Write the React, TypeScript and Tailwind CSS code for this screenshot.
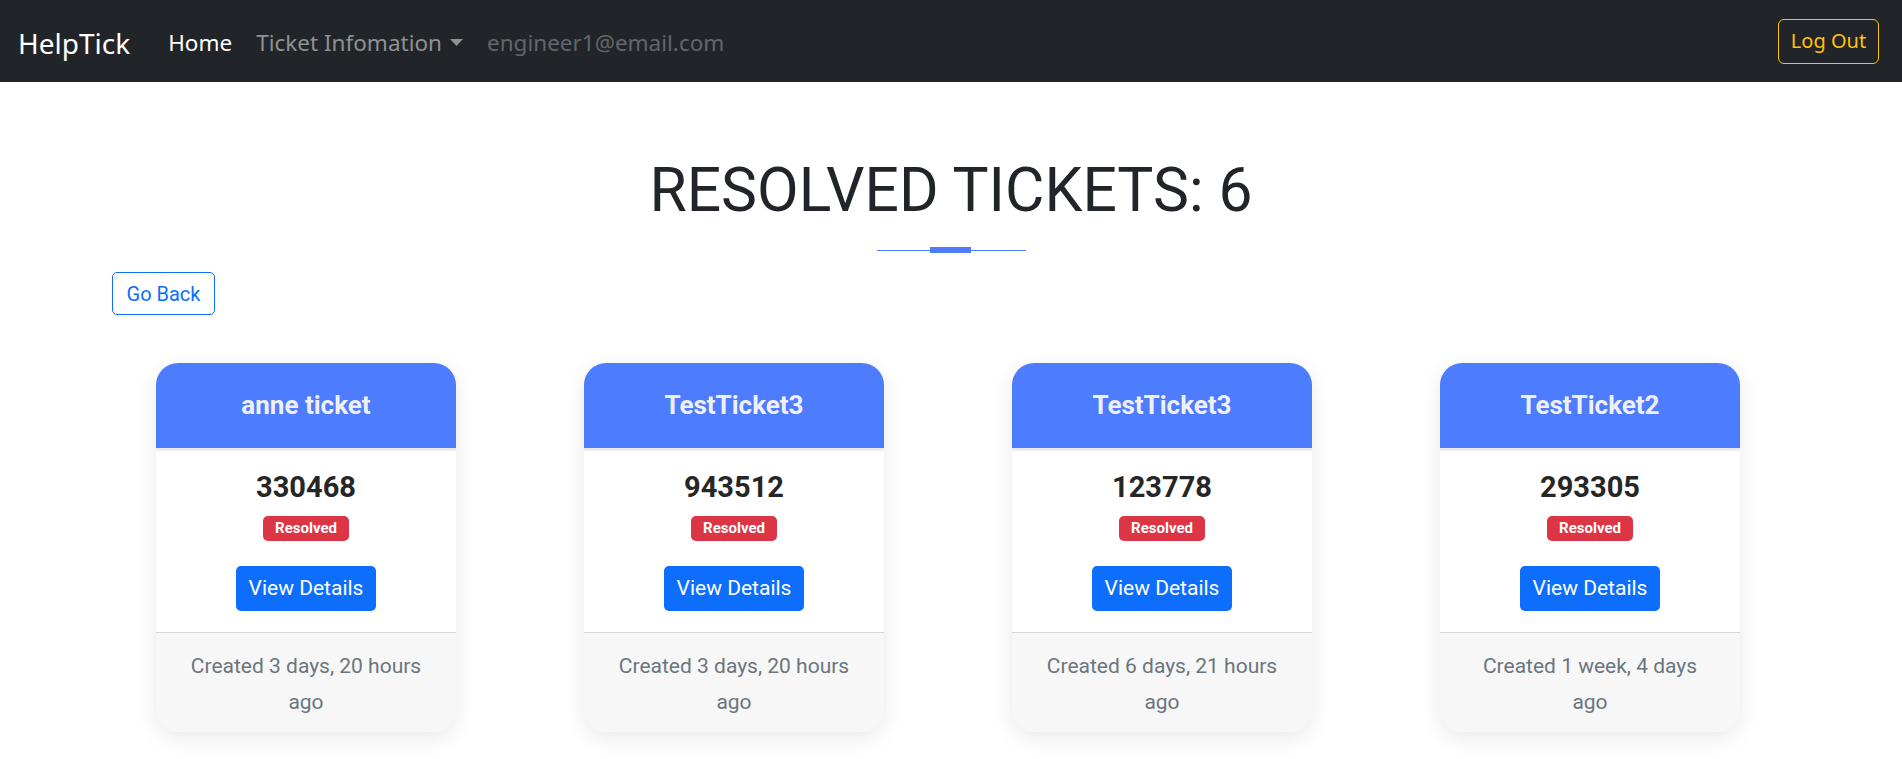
const tickets = [
  { title: "anne ticket", id: "330468", created: "Created 3 days, 20 hours ago" },
  { title: "TestTicket3", id: "943512", created: "Created 3 days, 20 hours ago" },
  { title: "TestTicket3", id: "123778", created: "Created 6 days, 21 hours ago" },
  { title: "TestTicket2", id: "293305", created: "Created 1 week, 4 days ago" },
];

function Navbar() {
  return (
    <nav className="flex h-[82px] items-center bg-[#212529] pl-[18px] pr-[23px] font-['Noto_Sans','Open_Sans',sans-serif]">
      <span className="mt-[3px] text-[28px] text-white">HelpTick</span>
      <div className="mt-[3px] ml-[38px] flex items-center gap-[24px] text-[22.5px]">
        <span className="text-white">Home</span>
        <span className="flex items-center text-[#8f9193]">
          Ticket Infomation
          <svg className="ml-[8px]" width="13" height="7" viewBox="0 0 13 7">
            <path d="M0 0h13L6.5 7z" fill="#8f9193" />
          </svg>
        </span>
        <span className="text-[#62666b]">engineer1@email.com</span>
      </div>
      <button
        type="button"
        className="ml-auto h-[45px] w-[101px] rounded-[6px] border border-[#ffc107] text-[20px] text-[#ffc107]"
      >
        Log Out
      </button>
    </nav>
  );
}

function TicketCard({ title, id, created }: { title: string; id: string; created: string }) {
  return (
    <div className="w-[300px] overflow-hidden rounded-[22px] bg-white shadow-[0_6px_22px_rgba(0,0,0,0.09)]">
      <div className="flex h-[88px] items-center justify-center border-b-[3px] border-[#ececec] bg-[#4d7cfe]">
        <span className="text-[26px] font-bold text-[#f0f0f4]">{title}</span>
      </div>
      <div className="flex h-[182px] flex-col items-center border-b border-[#d9d9d9] pt-[18px]">
        <span className="text-[29px] leading-[36px] font-bold text-[#262626]">{id}</span>
        <span className="mt-[11px] flex h-[25px] items-center rounded-[5px] bg-[#dc3545] px-[12px] text-[15px] font-bold text-white">
          Resolved
        </span>
        <button
          type="button"
          className="mt-[25px] h-[45px] rounded-[5px] bg-[#0d6efd] px-[13px] text-[21px] text-white"
        >
          View Details
        </button>
      </div>
      <div className="bg-[#f7f7f7] px-[24px] pt-[15px] pb-[12px] text-center text-[21px] leading-[36px] text-[#6c757d]">
        {created}
      </div>
    </div>
  );
}

export default function App() {
  return (
    <div className="min-h-[759px] bg-white font-['Roboto',sans-serif]">
      <Navbar />
      <div className="flex flex-col items-center pt-[73px]">
        <h1 className="text-[60.5px] leading-[72px] text-[#212529]">RESOLVED TICKETS: 6</h1>
        <div className="mt-[20px] flex items-center">
          <div className="h-px w-[53px] bg-[#4d7cfe]" />
          <div className="h-[6px] w-[41px] bg-[#4d7cfe]" />
          <div className="h-px w-[55px] bg-[#4d7cfe]" />
        </div>
      </div>
      <div className="px-[112px] pt-[19px]">
        <button
          type="button"
          className="h-[43px] w-[103px] rounded-[5px] border border-[#0d6efd] text-[20px] text-[#0d6efd]"
        >
          Go Back
        </button>
      </div>
      <div className="mt-[48px] ml-[92px] grid w-[1712px] grid-cols-4">
        {tickets.map((t, i) => (
          <div key={i} className="flex justify-center">
            <TicketCard {...t} />
          </div>
        ))}
      </div>
    </div>
  );
}
